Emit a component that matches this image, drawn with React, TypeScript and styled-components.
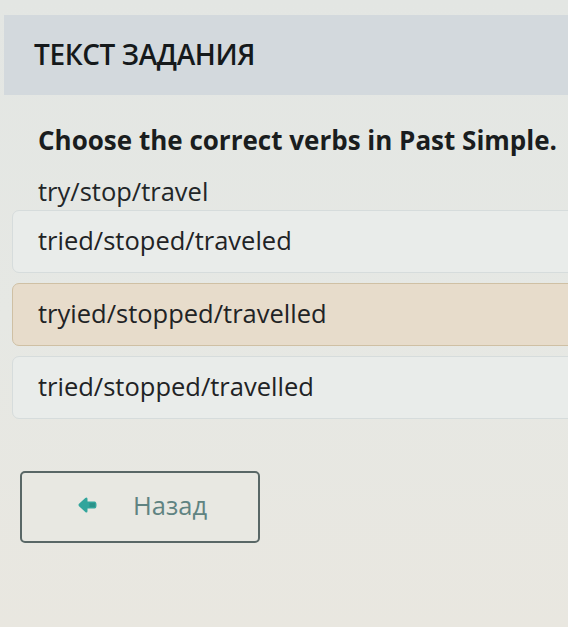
import { createGlobalStyle, styled } from 'styled-components';

type OptionTone = 'plain' | 'selected';

const options: { text: string; tone: OptionTone }[] = [
  { text: 'tried/stoped/traveled', tone: 'plain' },
  { text: 'tryied/stopped/travelled', tone: 'selected' },
  { text: 'tried/stopped/travelled', tone: 'plain' },
];

const GlobalStyle = createGlobalStyle`
  html, body {
    margin: 0;
    padding: 0;
  }

  body {
    font-family: 'Open Sans', 'Noto Sans', sans-serif;
    color: #1c1f20;
    background: linear-gradient(180deg, #e3e6e3 0%, #e6e8e4 50%, #e9e7e0 100%);
    min-height: 627px;
    overflow: hidden;
  }
`;

const StyledPage = styled.main`
  box-sizing: border-box;
  width: 568px;
  height: 627px;
  padding-top: 15px;
`;

const StyledHeader = styled.header`
  box-sizing: border-box;
  height: 80px;
  margin-left: 4px;
  padding: 0 0 0 30px;
  display: flex;
  align-items: center;
  background: #d3d9dd;
`;

const StyledHeaderTitle = styled.h1`
  margin: 0 0 2px;
  font-size: 28px;
  font-weight: 600;
  letter-spacing: -0.4px;
  color: #15191b;
`;

const StyledTask = styled.section`
  padding: 26px 0 0;
`;

const StyledQuestion = styled.h2`
  margin: 0 0 0 38px;
  font-size: 26px;
  font-weight: 700;
  line-height: 38px;
  white-space: nowrap;
  color: #1a1d1e;
`;

const StyledPrompt = styled.p`
  margin: 15px 0 0 38px;
  font-size: 25.5px;
  line-height: 34px;
  color: #222628;
`;

const StyledOptions = styled.div`
  display: flex;
  flex-direction: column;
  gap: 10px;
  margin: 2px 0 0 12px;
`;

const StyledOption = styled.div<{ $tone: OptionTone }>`
  box-sizing: border-box;
  height: 63px;
  margin-right: -10px;
  padding: 0 0 4px 25px;
  display: flex;
  align-items: center;
  font-size: 25.5px;
  color: #1f2325;
  background: ${({ $tone }) => ($tone === 'selected' ? '#e7dccb' : '#e9ecea')};
  border: 1px solid ${({ $tone }) => ($tone === 'selected' ? '#cfc0a4' : '#d6dcdc')};
  border-radius: 7px;
`;

const StyledBackButton = styled.button`
  box-sizing: border-box;
  width: 240px;
  height: 72px;
  margin: 52px 0 0 20px;
  padding: 0 0 4px 56px;
  display: flex;
  align-items: center;
  gap: 36px;
  font-family: 'Open Sans', 'Noto Sans', sans-serif;
  font-size: 25.5px;
  color: #5f8381;
  background: #e8e8e2;
  border: 2px solid #596766;
  border-radius: 5px;
`;

const ArrowIcon = () => (
  <svg width="19" height="16" viewBox="0 0 19 16" aria-hidden="true">
    <path
      d="M8.5 0.5 Q9.5 0.5 9.5 2 L9.5 4.5 L16.5 4.5 Q18.5 4.5 18.5 8 Q18.5 11.5 16.5 11.5 L9.5 11.5 L9.5 14 Q9.5 15.5 8.5 15.5 Q7.9 15.5 7.3 14.9 L1 9.2 Q0 8 1 6.8 L7.3 1.1 Q7.9 0.5 8.5 0.5 Z"
      fill="#32a59c"
    />
    <path d="M11.5 7 H17 M11.5 9 H17" stroke="#1f7670" strokeWidth="0.8" />
  </svg>
);

export default function App() {
  return (
    <>
      <GlobalStyle />
      <StyledPage>
        <StyledHeader>
          <StyledHeaderTitle>ТЕКСТ ЗАДАНИЯ</StyledHeaderTitle>
        </StyledHeader>
        <StyledTask>
          <StyledQuestion>Choose the correct verbs in Past Simple.</StyledQuestion>
          <StyledPrompt>try/stop/travel</StyledPrompt>
          <StyledOptions>
            {options.map(({ text, tone }) => (
              <StyledOption key={text} $tone={tone}>
                {text}
              </StyledOption>
            ))}
          </StyledOptions>
          <StyledBackButton type="button">
            <ArrowIcon />
            Назад
          </StyledBackButton>
        </StyledTask>
      </StyledPage>
    </>
  );
}
